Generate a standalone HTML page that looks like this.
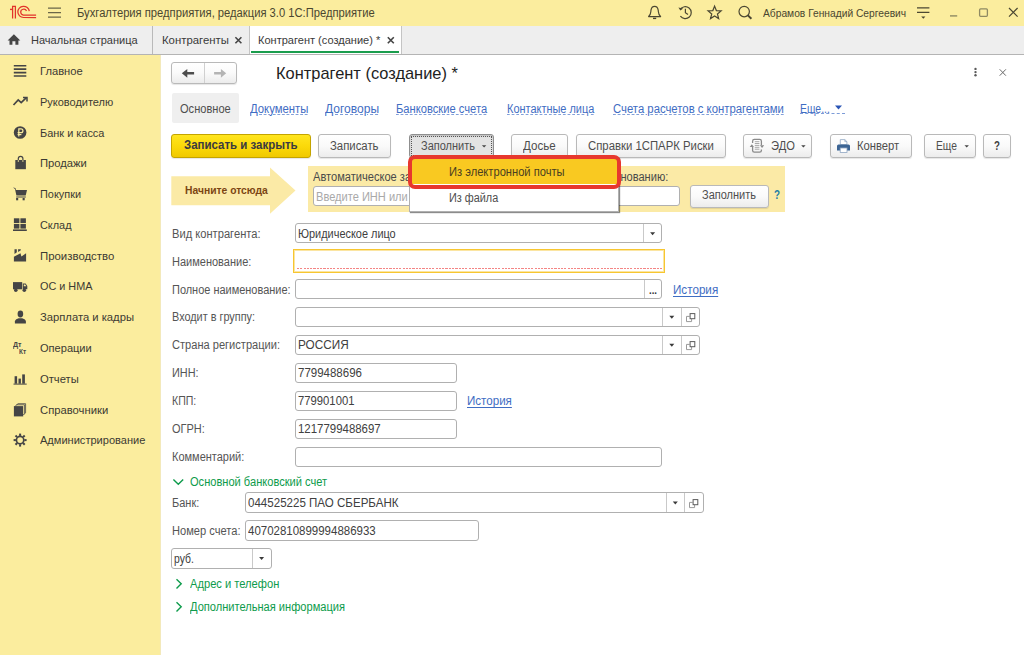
<!DOCTYPE html>
<html><head><meta charset="utf-8">
<style>
*{box-sizing:border-box;margin:0;padding:0}
html,body{width:1024px;height:655px;overflow:hidden;background:#fff;font-family:"Liberation Sans",sans-serif;font-size:12px;color:#333}
.t{position:absolute;white-space:nowrap;transform-origin:0 0;font-family:"Liberation Sans",sans-serif}
.b{position:absolute}
.btn{position:absolute;border:1px solid #b9b9b9;border-radius:3px;background:linear-gradient(#ffffff 0%,#fafafa 50%,#ececec 100%);box-shadow:0 1px 1px rgba(0,0,0,.10)}
.fld{position:absolute;border:1px solid #b0b0b0;border-radius:3px;background:#fff}
.vl{position:absolute;width:1px;background:#c9c9c9}
svg{position:absolute;overflow:visible}
</style></head><body>
<div class="b" style="left:0;top:0;width:1024px;height:26px;background:#fbed9e"></div>
<div class="b" style="left:0;top:26px;width:1024px;height:29px;background:#eeeeee;border-bottom:1px solid #b4b4b4"></div>
<div class="b" style="left:0;top:55px;width:160px;height:600px;background:#fbed9e"></div>
<div class="b" style="left:160px;top:55px;width:1px;height:600px;background:#f3e9bb"></div>
<div class="b" style="left:152px;top:26px;width:1px;height:28px;background:#b9b9b9"></div>
<div class="b" style="left:249px;top:26px;width:153px;height:28px;background:#fff;border-left:1px solid #c4c4c4;border-right:1px solid #c4c4c4"></div>
<div class="b" style="left:251px;top:51px;width:148px;height:2px;background:#1a9d4d"></div>
<span class="t" style="left:77.0px;top:6.00px;font-size:12px;line-height:14px;color:#4a4630;transform:scaleX(0.9331);">Бухгалтерия предприятия, редакция 3.0 1С:Предприятие</span>
<span class="t" style="left:763.0px;top:7.00px;font-size:11px;line-height:13px;color:#4a4630;transform:scaleX(0.9314);">Абрамов Геннадий Сергеевич</span>
<span class="t" style="left:30.5px;top:34.00px;font-size:11px;line-height:13px;color:#3a3a3a;transform:scaleX(1.0017);">Начальная страница</span>
<span class="t" style="left:162.0px;top:34.00px;font-size:11px;line-height:13px;color:#3a3a3a;transform:scaleX(1.0328);">Контрагенты</span>
<span class="t" style="left:258.0px;top:34.00px;font-size:11px;line-height:13px;color:#3a3a3a;transform:scaleX(1.0032);">Контрагент (создание) *</span>
<span class="t" style="left:39.7px;top:64.00px;font-size:11.5px;line-height:14px;color:#3b3a33;transform:scaleX(0.9714);">Главное</span>
<span class="t" style="left:39.7px;top:95.00px;font-size:11.5px;line-height:14px;color:#3b3a33;transform:scaleX(0.9547);">Руководителю</span>
<span class="t" style="left:39.7px;top:126.00px;font-size:11.5px;line-height:14px;color:#3b3a33;transform:scaleX(0.9514);">Банк и касса</span>
<span class="t" style="left:39.7px;top:156.00px;font-size:11.5px;line-height:14px;color:#3b3a33;transform:scaleX(0.9747);">Продажи</span>
<span class="t" style="left:39.7px;top:187.00px;font-size:11.5px;line-height:14px;color:#3b3a33;transform:scaleX(0.9479);">Покупки</span>
<span class="t" style="left:39.7px;top:218.00px;font-size:11.5px;line-height:14px;color:#3b3a33;transform:scaleX(0.9472);">Склад</span>
<span class="t" style="left:39.7px;top:249.00px;font-size:11.5px;line-height:14px;color:#3b3a33;transform:scaleX(0.9908);">Производство</span>
<span class="t" style="left:39.7px;top:279.00px;font-size:11.5px;line-height:14px;color:#3b3a33;transform:scaleX(0.9437);">ОС и НМА</span>
<span class="t" style="left:39.7px;top:310.00px;font-size:11.5px;line-height:14px;color:#3b3a33;transform:scaleX(0.9765);">Зарплата и кадры</span>
<span class="t" style="left:39.7px;top:341.00px;font-size:11.5px;line-height:14px;color:#3b3a33;transform:scaleX(0.9612);">Операции</span>
<span class="t" style="left:39.7px;top:372.00px;font-size:11.5px;line-height:14px;color:#3b3a33;transform:scaleX(0.9751);">Отчеты</span>
<span class="t" style="left:39.7px;top:403.00px;font-size:11.5px;line-height:14px;color:#3b3a33;transform:scaleX(0.9791);">Справочники</span>
<span class="t" style="left:39.7px;top:433.00px;font-size:11.5px;line-height:14px;color:#3b3a33;transform:scaleX(0.9610);">Администрирование</span>
<div class="btn" style="left:171px;top:62px;width:66px;height:22px"></div>
<div class="vl" style="left:204px;top:63px;height:20px;background:#d0d0d0"></div>
<span class="t" style="left:276.4px;top:64.00px;font-size:17px;line-height:20px;color:#1e1e1e;transform:scaleX(0.9656);">Контрагент (создание) *</span>
<div class="b" style="left:171.5px;top:93px;width:67.5px;height:30px;background:#efefef;border-radius:2px"></div>
<span class="t" style="left:180.3px;top:102.00px;font-size:12px;line-height:14px;color:#4e4e4e;transform:scaleX(0.9221);">Основное</span>
<span class="t" style="left:249.7px;top:102.00px;font-size:12px;line-height:14px;color:#3f6dc3;transform:scaleX(0.9439);text-decoration:underline dashed #7d9cd8;text-decoration-thickness:1px;text-underline-offset:1px;">Документы</span>
<span class="t" style="left:324.7px;top:102.00px;font-size:12px;line-height:14px;color:#3f6dc3;transform:scaleX(1.0017);text-decoration:underline dashed #7d9cd8;text-decoration-thickness:1px;text-underline-offset:1px;">Договоры</span>
<span class="t" style="left:396.4px;top:102.00px;font-size:12px;line-height:14px;color:#3f6dc3;transform:scaleX(0.9309);text-decoration:underline dashed #7d9cd8;text-decoration-thickness:1px;text-underline-offset:1px;">Банковские счета</span>
<span class="t" style="left:506.6px;top:102.00px;font-size:12px;line-height:14px;color:#3f6dc3;transform:scaleX(0.9121);text-decoration:underline dashed #7d9cd8;text-decoration-thickness:1px;text-underline-offset:1px;">Контактные лица</span>
<span class="t" style="left:613.0px;top:102.00px;font-size:12px;line-height:14px;color:#3f6dc3;transform:scaleX(0.9431);text-decoration:underline dashed #7d9cd8;text-decoration-thickness:1px;text-underline-offset:1px;">Счета расчетов с контрагентами</span>
<span class="t" style="left:800.0px;top:102.00px;font-size:12px;line-height:14px;color:#3f6dc3;transform:scaleX(0.8655);">Еще...</span>
<div class="btn" style="left:171px;top:134px;width:140px;height:24px;background:linear-gradient(#ffe51f 0%,#fbd90a 50%,#f0c900 100%);border-color:#c4a400;"></div>
<span class="t" style="left:183.8px;top:138.00px;font-size:12px;line-height:14px;color:#3a3a40;transform:scaleX(0.9553);font-weight:bold;">Записать и закрыть</span>
<div class="btn" style="left:318px;top:134px;width:73px;height:24px;"></div>
<span class="t" style="left:330.0px;top:139.00px;font-size:12px;line-height:14px;color:#4e4e4e;transform:scaleX(0.9455);">Записать</span>
<div class="btn" style="left:409px;top:134px;width:85px;height:24px;background:#e3e3e3;border-color:#8f8f8f;box-shadow:inset 0 1px 2px rgba(0,0,0,.18);"></div>
<div class="b" style="left:411px;top:136px;width:81px;height:20px;border:1px dotted #555"></div>
<span class="t" style="left:421.2px;top:139.00px;font-size:12px;line-height:14px;color:#4e4e4e;transform:scaleX(0.9163);">Заполнить</span>
<div class="btn" style="left:511px;top:134px;width:57px;height:24px;"></div>
<span class="t" style="left:522.5px;top:139.00px;font-size:12px;line-height:14px;color:#4e4e4e;transform:scaleX(0.9653);">Досье</span>
<div class="btn" style="left:576px;top:134px;width:150px;height:24px;"></div>
<span class="t" style="left:588.0px;top:139.00px;font-size:12px;line-height:14px;color:#4e4e4e;transform:scaleX(0.9458);">Справки 1СПАРК Риски</span>
<div class="btn" style="left:743px;top:134px;width:69px;height:24px;"></div>
<span class="t" style="left:770.8px;top:139.00px;font-size:12px;line-height:14px;color:#4e4e4e;transform:scaleX(0.9269);">ЭДО</span>
<div class="btn" style="left:830px;top:134px;width:82px;height:24px;"></div>
<span class="t" style="left:857.3px;top:139.00px;font-size:12px;line-height:14px;color:#4e4e4e;transform:scaleX(0.9361);">Конверт</span>
<div class="btn" style="left:924px;top:134px;width:52px;height:24px;"></div>
<span class="t" style="left:936.3px;top:139.00px;font-size:12px;line-height:14px;color:#4e4e4e;transform:scaleX(0.8568);">Еще</span>
<div class="btn" style="left:983px;top:134px;width:28px;height:24px;"></div>
<span class="t" style="left:994.3px;top:138.00px;font-size:13px;line-height:16px;color:#404040;transform:scaleX(0.7500);font-weight:bold;">?</span>
<svg style="left:0;top:0" width="1024" height="655"><polygon points="171.3,176.3 270,176.3 270,167.5 295.5,190.6 270,213.7 270,205.3 171.3,205.3" fill="#fbeaa6"/></svg>
<div class="b" style="left:308px;top:166.2px;width:477px;height:46.3px;background:#fbeaa6"></div>
<span class="t" style="left:185.3px;top:184.00px;font-size:11px;line-height:13px;color:#7b4513;transform:scaleX(0.9375);font-weight:bold;">Начните отсюда</span>
<span class="t" style="left:312.5px;top:170.00px;font-size:12px;line-height:14px;color:#4a4a4a;transform:scaleX(0.9236);">Автоматическое заполнение реквизитов по ИНН или наименованию:</span>
<div class="fld" style="left:312.5px;top:186.3px;width:367px;height:19.5px"></div>
<span class="t" style="left:315.8px;top:190.00px;font-size:12px;line-height:14px;color:#a9a9a9;transform:scaleX(0.9227);">Введите ИНН или наименование</span>
<div class="btn" style="left:690px;top:185px;width:79px;height:23px;"></div>
<span class="t" style="left:702.0px;top:188.00px;font-size:12px;line-height:14px;color:#4e4e4e;transform:scaleX(0.9163);">Заполнить</span>
<span class="t" style="left:773.8px;top:188.00px;font-size:12px;line-height:14px;color:#1d7ea6;transform:scaleX(0.8214);font-weight:bold;">?</span>
<span class="t" style="left:171.8px;top:227.00px;font-size:12px;line-height:14px;color:#555555;transform:scaleX(0.9287);">Вид контрагента:</span>
<span class="t" style="left:171.8px;top:255.00px;font-size:12px;line-height:14px;color:#555555;transform:scaleX(0.9166);">Наименование:</span>
<span class="t" style="left:171.8px;top:283.00px;font-size:12px;line-height:14px;color:#555555;transform:scaleX(0.9132);">Полное наименование:</span>
<span class="t" style="left:171.8px;top:310.00px;font-size:12px;line-height:14px;color:#555555;transform:scaleX(0.9063);">Входит в группу:</span>
<span class="t" style="left:171.8px;top:338.00px;font-size:12px;line-height:14px;color:#555555;transform:scaleX(0.9233);">Страна регистрации:</span>
<span class="t" style="left:171.8px;top:366.00px;font-size:12px;line-height:14px;color:#555555;transform:scaleX(0.9065);">ИНН:</span>
<span class="t" style="left:171.8px;top:394.00px;font-size:12px;line-height:14px;color:#555555;transform:scaleX(0.8810);">КПП:</span>
<span class="t" style="left:171.8px;top:422.00px;font-size:12px;line-height:14px;color:#555555;transform:scaleX(0.9154);">ОГРН:</span>
<span class="t" style="left:171.8px;top:450.00px;font-size:12px;line-height:14px;color:#555555;transform:scaleX(0.9163);">Комментарий:</span>
<div class="fld" style="left:295px;top:223px;width:367.29999999999995px;height:20px;"></div>
<div class="vl" style="left:643px;top:224px;height:18px"></div>
<svg style="left:0;top:0" width="1024" height="655"><polygon points="650.1,232.3 655.1,232.3 652.6,235.3" fill="#3a3a3a"/></svg>
<span class="t" style="left:298.2px;top:227.00px;font-size:12px;line-height:14px;color:#404040;transform:scaleX(0.9104);">Юридическое лицо</span>
<div class="b" style="left:293px;top:249px;width:372px;height:24px;border:1px solid #f7c630;box-shadow:inset 0 0 0 1px rgba(247,198,48,.45);background:#fff"></div>
<div class="b" style="left:297px;top:268px;width:365px;height:1px;background:repeating-linear-gradient(90deg,#f48585 0,#f48585 2.2px,transparent 2.2px,transparent 3.3px)"></div>
<div class="fld" style="left:295px;top:279px;width:367.29999999999995px;height:20px;"></div>
<div class="vl" style="left:643.5px;top:280px;height:18px"></div>
<span class="t" style="left:649.0px;top:284.00px;font-size:11px;line-height:13px;color:#333;transform:scaleX(0.8779);font-weight:bold;">...</span>
<span class="t" style="left:673.2px;top:283.00px;font-size:12px;line-height:14px;color:#3f6dc3;transform:scaleX(0.9710);text-decoration:underline;text-decoration-thickness:1px;text-underline-offset:2px;">История</span>
<div class="fld" style="left:295px;top:307px;width:405px;height:20px;"></div>
<div class="vl" style="left:662.3px;top:308px;height:18px"></div>
<div class="vl" style="left:681.3px;top:308px;height:18px"></div>
<svg style="left:0;top:0" width="1024" height="655"><polygon points="669.3,315.7 674.3,315.7 671.8,318.7" fill="#3a3a3a"/></svg>
<svg style="left:685.6px;top:312.6px" width="10" height="10" viewBox="0 0 10 10"><path d="M3.6 3.4h-3.1v5.2h5.1v-2.6" fill="none" stroke="#9a9a9a" stroke-width="1"/><rect x="4.1" y="0.6" width="4.7" height="5.1" fill="none" stroke="#5c5c5c" stroke-width="1"/></svg>
<div class="fld" style="left:295px;top:335px;width:405px;height:20px;"></div>
<div class="vl" style="left:662.3px;top:336px;height:18px"></div>
<div class="vl" style="left:681.3px;top:336px;height:18px"></div>
<svg style="left:0;top:0" width="1024" height="655"><polygon points="669.3,343.7 674.3,343.7 671.8,346.7" fill="#3a3a3a"/></svg>
<svg style="left:685.6px;top:340.6px" width="10" height="10" viewBox="0 0 10 10"><path d="M3.6 3.4h-3.1v5.2h5.1v-2.6" fill="none" stroke="#9a9a9a" stroke-width="1"/><rect x="4.1" y="0.6" width="4.7" height="5.1" fill="none" stroke="#5c5c5c" stroke-width="1"/></svg>
<span class="t" style="left:298.2px;top:338.00px;font-size:12px;line-height:14px;color:#404040;transform:scaleX(0.9798);">РОССИЯ</span>
<div class="fld" style="left:295px;top:363px;width:162px;height:20px;"></div>
<span class="t" style="left:298.2px;top:366.00px;font-size:12px;line-height:14px;color:#404040;transform:scaleX(0.9580);">7799488696</span>
<div class="fld" style="left:295px;top:391px;width:162px;height:20px;"></div>
<span class="t" style="left:298.2px;top:394.00px;font-size:12px;line-height:14px;color:#404040;transform:scaleX(0.9397);">779901001</span>
<div class="fld" style="left:295px;top:419px;width:162px;height:20px;"></div>
<span class="t" style="left:298.2px;top:422.00px;font-size:12px;line-height:14px;color:#404040;transform:scaleX(0.9531);">1217799488697</span>
<span class="t" style="left:467.2px;top:394.00px;font-size:12px;line-height:14px;color:#3f6dc3;transform:scaleX(0.9644);text-decoration:underline;text-decoration-thickness:1px;text-underline-offset:2px;">История</span>
<div class="fld" style="left:295px;top:447px;width:367px;height:20px;"></div>
<svg style="left:173.4px;top:479.3px"  width="10.6" height="6.2" viewBox="0 0 10.6 6.2"><path d="M0.4 0.5L5.3 5.3L10.2 0.5" fill="none" stroke="#0d9b4b" stroke-width="1.4"/></svg>
<span class="t" style="left:190.0px;top:475.00px;font-size:12px;line-height:14px;color:#0d9b4b;transform:scaleX(0.9233);">Основной банковский счет</span>
<span class="t" style="left:171.8px;top:496.00px;font-size:12px;line-height:14px;color:#555555;transform:scaleX(0.9176);">Банк:</span>
<div class="fld" style="left:245px;top:492px;width:459px;height:21px;"></div>
<div class="vl" style="left:666px;top:493px;height:19px"></div>
<div class="vl" style="left:684px;top:493px;height:19px"></div>
<svg style="left:0;top:0" width="1024" height="655"><polygon points="672.8,501.6 677.8,501.6 675.3,504.6" fill="#3a3a3a"/></svg>
<svg style="left:689.2px;top:498.6px" width="10" height="10" viewBox="0 0 10 10"><path d="M3.6 3.4h-3.1v5.2h5.1v-2.6" fill="none" stroke="#9a9a9a" stroke-width="1"/><rect x="4.1" y="0.6" width="4.7" height="5.1" fill="none" stroke="#5c5c5c" stroke-width="1"/></svg>
<span class="t" style="left:248.2px;top:496.00px;font-size:12px;line-height:14px;color:#404040;transform:scaleX(0.9631);">044525225 ПАО СБЕРБАНК</span>
<span class="t" style="left:171.8px;top:524.00px;font-size:12px;line-height:14px;color:#555555;transform:scaleX(0.9261);">Номер счета:</span>
<div class="fld" style="left:245px;top:520px;width:233.5px;height:21px;"></div>
<span class="t" style="left:248.2px;top:524.00px;font-size:12px;line-height:14px;color:#404040;transform:scaleX(0.9566);">40702810899994886933</span>
<div class="fld" style="left:171px;top:548px;width:100.5px;height:21px;"></div>
<div class="vl" style="left:252px;top:549px;height:19px"></div>
<svg style="left:0;top:0" width="1024" height="655"><polygon points="259.1,557.1 264.1,557.1 261.6,560.1" fill="#3a3a3a"/></svg>
<span class="t" style="left:174.2px;top:552.00px;font-size:12px;line-height:14px;color:#404040;transform:scaleX(0.8649);">руб.</span>
<svg style="left:176.2px;top:578.7px" width="6" height="10" viewBox="0 0 6 10"><path d="M0.5 0.3L5.2 4.8L0.5 9.4" fill="none" stroke="#0d9b4b" stroke-width="1.4"/></svg>
<span class="t" style="left:190.0px;top:577.00px;font-size:12px;line-height:14px;color:#0d9b4b;transform:scaleX(0.9285);">Адрес и телефон</span>
<svg style="left:176.2px;top:601.5px" width="6" height="10" viewBox="0 0 6 10"><path d="M0.5 0.3L5.2 4.8L0.5 9.4" fill="none" stroke="#0d9b4b" stroke-width="1.4"/></svg>
<span class="t" style="left:190.0px;top:600.00px;font-size:12px;line-height:14px;color:#0d9b4b;transform:scaleX(0.9238);">Дополнительная информация</span>
<svg style="left:0;top:0" width="1024" height="655" viewBox="0 0 1024 655"><g fill="none" stroke="#e2332b" stroke-width="1.25" stroke-linecap="butt" stroke-linejoin="miter">
<path d="M10 9.4H12.6" stroke-width="1.4"/>
<path d="M12.6 18.5V6.4H15.4V18.5"/>
<path d="M29.3 11.2A5.75 5.6 0 1 0 23.5 17.5H36.1"/>
<path d="M26.5 11.0A3.0 2.95 0 1 0 23.4 15.05H36.1"/>
</g></svg>
<svg style="left:0;top:0" width="1024" height="655" viewBox="0 0 1024 655"><g stroke="#6a6648" stroke-width="1.3"><path d="M48 8.1H61M48 12.6H61M48 17.1H61"/></g></svg>
<svg style="left:0;top:0" width="1024" height="655" viewBox="0 0 1024 655"><g fill="none" stroke="#4b4732" stroke-width="1.2" stroke-linejoin="round">
<path d="M648.6 16.6C651 14.8 650.6 12.6 651 10.2C651.4 7.6 653 6.4 654.6 6.4C656.2 6.4 657.8 7.6 658.2 10.2C658.6 12.6 658.2 14.8 660.6 16.6Z"/>
<path d="M653 18.4H656.2" stroke-width="1.4"/></g></svg>
<svg style="left:0;top:0" width="1024" height="655" viewBox="0 0 1024 655"><g fill="none" stroke="#4b4732" stroke-width="1.2">
<path d="M680.2 9.4A6 6 0 1 1 680.4 16.2"/>
<path d="M685.4 8.8V12.8L688 14.6"/>
<path d="M678.4 7.4L680.4 10.6L683.2 8.4" fill="#4b4732" stroke="none"/></g></svg>
<svg style="left:0;top:0" width="1024" height="655" viewBox="0 0 1024 655"><polygon points="714.60,6.10 716.36,10.57 721.16,10.87 717.45,13.93 718.66,18.58 714.60,16.00 710.54,18.58 711.75,13.93 708.04,10.87 712.84,10.57" fill="none" stroke="#4b4732" stroke-width="1.2" stroke-linejoin="miter"/></svg>
<svg style="left:0;top:0" width="1024" height="655" viewBox="0 0 1024 655"><g fill="none" stroke="#4b4732"><circle cx="744.2" cy="11.6" r="5.2" stroke-width="1.2"/><path d="M747.9 15.4L751.4 18.8" stroke-width="2"/></g></svg>
<svg style="left:0;top:0" width="1024" height="655" viewBox="0 0 1024 655"><g stroke="#4b4732" stroke-width="1.2"><path d="M917 7.9H929.4M917 12.4H929.4"/><path d="M921.2 16.4H925.4L923.3 18.8Z" fill="#4b4732" stroke="none"/></g></svg>
<svg style="left:0;top:0" width="1024" height="655" viewBox="0 0 1024 655"><path d="M950 15.9H957.2" stroke="#8f8a63" stroke-width="1.4"/></svg>
<svg style="left:0;top:0" width="1024" height="655" viewBox="0 0 1024 655"><rect x="979.6" y="8.9" width="7.8" height="7.4" rx="1" fill="none" stroke="#8f8a63" stroke-width="1.3"/></svg>
<svg style="left:0;top:0" width="1024" height="655" viewBox="0 0 1024 655"><path d="M1009 8L1017.6 16.7M1017.6 8L1009 16.7" stroke="#4b4732" stroke-width="1.2"/></svg>
<svg style="left:0;top:0" width="1024" height="655" viewBox="0 0 1024 655"><path d="M7.6 40.4L13.9 34.2L20.3 40.4H18.4V44.7H15.4V41.2H12.4V44.7H9.5V40.4Z" fill="#454545"/></svg>
<svg style="left:0;top:0" width="1024" height="655" viewBox="0 0 1024 655"><path d="M235.4 37.3L241.4 43.3M241.4 37.3L235.4 43.3" stroke="#444" stroke-width="1.6"/></svg>
<svg style="left:0;top:0" width="1024" height="655" viewBox="0 0 1024 655"><path d="M387.8 37.3L393.8 43.3M393.8 37.3L387.8 43.3" stroke="#444" stroke-width="1.6"/></svg>
<svg style="left:0;top:0" width="1024" height="655" viewBox="0 0 1024 655"><path d="M181.8 73.3L187.3 68.9V72.1H194.1V74.6H187.3V77.7Z" fill="#4e4e4e"/></svg>
<svg style="left:0;top:0" width="1024" height="655" viewBox="0 0 1024 655"><path d="M226.2 73.3L220.9 68.9V72.1H214.1V74.6H220.9V77.7Z" fill="#b4b4b4"/></svg>
<svg style="left:0;top:0" width="1024" height="655" viewBox="0 0 1024 655"><g fill="#5a5a5a"><circle cx="975.5" cy="68.9" r="1.2"/><circle cx="975.5" cy="72.1" r="1.2"/><circle cx="975.5" cy="75.3" r="1.2"/></g></svg>
<svg style="left:0;top:0" width="1024" height="655" viewBox="0 0 1024 655"><path d="M999.7 69.3L1005.9 75.7M1005.9 69.3L999.7 75.7" stroke="#6a6a6a" stroke-width="1"/></svg>
<svg style="left:0;top:0" width="1024" height="655" viewBox="0 0 1024 655"><path d="M835 105.6H842L838.5 109.4Z" fill="#2a55b5"/></svg>
<div class="b" style="left:800px;top:113px;width:45px;height:0;border-top:1px dashed #7d9cd8"></div>
<svg style="left:0;top:0" width="1024" height="655" viewBox="0 0 1024 655"><path d="M481.90000000000003 145.3H486.3L484.1 147.6Z" fill="#444"/></svg>
<svg style="left:0;top:0" width="1024" height="655" viewBox="0 0 1024 655"><path d="M801.1999999999999 145.3H805.6L803.4 147.6Z" fill="#444"/></svg>
<svg style="left:0;top:0" width="1024" height="655" viewBox="0 0 1024 655"><path d="M964.5 145.3H968.9000000000001L966.7 147.6Z" fill="#444"/></svg>
<svg style="left:0;top:0" width="1024" height="655" viewBox="0 0 1024 655"><g stroke="#454545" stroke-width="1.6"><path d="M13.8 65.7H26.3M13.8 69.1H26.3M13.8 72.6H26.3M13.8 76H26.3"/></g></svg>
<svg style="left:0;top:0" width="1024" height="655" viewBox="0 0 1024 655"><g fill="none" stroke="#454545" stroke-width="1.7"><path d="M13.5 105L18.2 99.9L21.2 102.7L26.4 97.7"/><path d="M23 97.4H27V101.4" stroke-width="1.5"/></g></svg>
<svg style="left:0;top:0" width="1024" height="655" viewBox="0 0 1024 655"><circle cx="20.1" cy="132.5" r="6.3" fill="#454545"/><g fill="none" stroke="#fbed9e" stroke-width="1.2"><path d="M18.8 136.6V128.8H21A1.9 1.9 0 0 1 21 132.7H17.6"/><path d="M17.6 134.6H21.4"/></g></svg>
<svg style="left:0;top:0" width="1024" height="655" viewBox="0 0 1024 655"><path d="M15.3 160H25.9V169.2H15.3Z" fill="#454545"/><path d="M18.3 161.5V158.6A2.3 2.3 0 0 1 22.9 158.6V161.5" fill="none" stroke="#454545" stroke-width="1.2"/><path d="M18.3 160V162M22.9 160V162" stroke="#fbed9e" stroke-width="0.8"/></svg>
<svg style="left:0;top:0" width="1024" height="655" viewBox="0 0 1024 655"><path d="M13 187.6L15.4 188.1L16 189.9H27L25.7 195.6H16.4L15 189Z" fill="#454545"/><path d="M16.2 197H25.8" stroke="#454545" stroke-width="1"/><rect x="16.1" y="198" width="2.1" height="2.3" fill="#454545"/><rect x="22.6" y="198" width="2.1" height="2.3" fill="#454545"/></svg>
<svg style="left:0;top:0" width="1024" height="655" viewBox="0 0 1024 655"><g fill="#454545"><rect x="13.9" y="218.3" width="5.5" height="4.7"/><rect x="20.4" y="218.3" width="5.5" height="4.7"/><rect x="13.9" y="223.9" width="5.5" height="4.7"/><rect x="20.4" y="223.9" width="5.5" height="4.7"/><rect x="13" y="229.4" width="13.8" height="1.6"/></g></svg>
<svg style="left:0;top:0" width="1024" height="655" viewBox="0 0 1024 655"><g fill="#454545"><path d="M13.9 261.6V256.8L20.5 253.2L21.4 256.5L26.1 253.3V261.6Z"/><path d="M14.5 249.3H16.8V252.3L14.5 253.9Z"/><path d="M18.1 249.3H20.8V250.2L18.1 251.9Z"/></g></svg>
<svg style="left:0;top:0" width="1024" height="655" viewBox="0 0 1024 655"><g fill="#454545"><rect x="13" y="282.1" width="9.2" height="7.2"/><path d="M22.8 283.6H25.6L27.3 286V289.3H22.8Z"/><circle cx="15.8" cy="290.2" r="1.8"/><circle cx="24.3" cy="290.2" r="1.8"/></g><path d="M23.8 284.6H25.2L26.3 286.3H23.8Z" fill="#fbed9e"/></svg>
<svg style="left:0;top:0" width="1024" height="655" viewBox="0 0 1024 655"><g fill="#454545"><ellipse cx="20.4" cy="314" rx="2.8" ry="3.4"/><path d="M14.9 323.4V321.6C14.9 319.6 17.4 318.6 18.6 318.2H22.2C23.4 318.6 25.9 319.6 25.9 321.6V323.4Z"/></g></svg>
<svg style="left:0;top:0" width="1024" height="655" viewBox="0 0 1024 655"><g fill="#454545"><rect x="13.5" y="383.6" width="13.2" height="1"/><rect x="14.6" y="376.2" width="2.5" height="7.5"/><rect x="18.5" y="378.6" width="2.4" height="5.1"/><rect x="22.2" y="374.4" width="2.7" height="9.3"/></g></svg>
<svg style="left:0;top:0" width="1024" height="655" viewBox="0 0 1024 655"><g fill="none" stroke="#454545" stroke-width="0.8"><path d="M16.4 405.2L18 403.7H25.6V412.8L24.2 414.2"/><path d="M15.2 406.2L16.6 404.8H24.6V413.6L23.2 415"/></g><rect x="13.9" y="406.1" width="9.3" height="10.3" fill="#454545"/></svg>
<svg style="left:0;top:0" width="1024" height="655" viewBox="0 0 1024 655"><circle cx="20.1" cy="440.1" r="3.7" fill="none" stroke="#454545" stroke-width="1.7"/><path d="M24.30 440.10L26.60 440.10" stroke="#454545" stroke-width="2"/><path d="M23.07 443.07L24.70 444.70" stroke="#454545" stroke-width="2"/><path d="M20.10 444.30L20.10 446.60" stroke="#454545" stroke-width="2"/><path d="M17.13 443.07L15.50 444.70" stroke="#454545" stroke-width="2"/><path d="M15.90 440.10L13.60 440.10" stroke="#454545" stroke-width="2"/><path d="M17.13 437.13L15.50 435.50" stroke="#454545" stroke-width="2"/><path d="M20.10 435.90L20.10 433.60" stroke="#454545" stroke-width="2"/><path d="M23.07 437.13L24.70 435.50" stroke="#454545" stroke-width="2"/></svg>
<svg style="left:0;top:0" width="1024" height="655" viewBox="0 0 1024 655"><g fill="none" stroke="#8a8a8a" stroke-width="1.3">
<path d="M752.6 147V150.4A1.8 1.8 0 0 0 754.4 152.2H759.6A1.8 1.8 0 0 0 761.4 150.4V149.4"/>
<path d="M752.6 143V141.2A1.8 1.8 0 0 1 754.4 139.4H759.6A1.8 1.8 0 0 1 761.4 141.2V145.2"/>
<path d="M754.8 141.7H759.4M754.8 143.5H759.4M754.8 145.4H759.4M754.8 147.3H759.4M754.8 149.2H759.4" stroke-width="1" stroke="#a8a8a8"/>
</g>
<path d="M749.7 147H754L751.85 144.3Z" fill="#8a8a8a"/><path d="M759.9 145.3H764.2L762.05 148Z" fill="#8a8a8a"/></svg>
<svg style="left:0;top:0" width="1024" height="655" viewBox="0 0 1024 655"><path d="M840.3 144.6V139.6H844.8L846.9 141.6V144.6Z" fill="#fff" stroke="#8fa6c2" stroke-width="0.8"/>
<path d="M844.8 139.6V141.6H846.9" fill="none" stroke="#8fa6c2" stroke-width="0.7"/>
<path d="M837 146A1.5 1.5 0 0 1 838.5 144.5H848.5A1.5 1.5 0 0 1 850 146V150.4H837Z" fill="#3b6494"/>
<rect x="840.2" y="148" width="6.8" height="4.4" fill="#fff" stroke="#8fa6c2" stroke-width="0.8"/></svg>
<span class="t" style="left:13.4px;top:340.00px;font-size:7.5px;line-height:9px;color:#454545;transform:scaleX(0.9419);font-weight:bold;">Дт</span>
<span class="t" style="left:18.7px;top:348.00px;font-size:7px;line-height:8px;color:#454545;transform:scaleX(0.9187);font-weight:bold;">Кт</span>
<div class="b" style="left:409px;top:157px;width:210px;height:55px;background:#fff;border:1px solid #b0b0b0;box-shadow:1px 1px 1px rgba(0,0,0,.45)"></div>
<div class="b" style="left:410px;top:158px;width:208px;height:26px;background:#f9c921"></div>
<div class="b" style="left:408px;top:155px;width:213px;height:34px;border:4px solid #e7382e;border-radius:7px"></div>
<span class="t" style="left:449.2px;top:165.00px;font-size:12px;line-height:14px;color:#4a4020;transform:scaleX(0.9286);">Из электронной почты</span>
<span class="t" style="left:449.2px;top:191.00px;font-size:12px;line-height:14px;color:#4e4e4e;transform:scaleX(0.9047);">Из файла</span>
</body></html>
